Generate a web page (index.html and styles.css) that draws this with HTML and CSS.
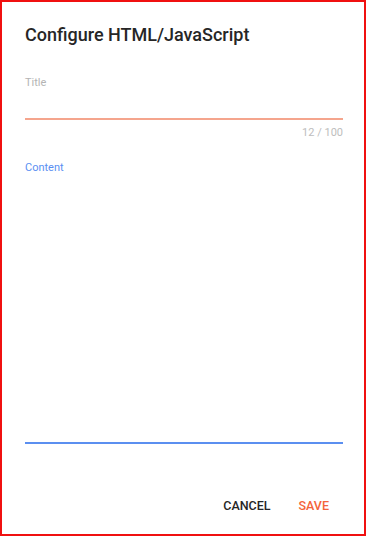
FILE: index.html
```html
<!DOCTYPE html>
<html lang="en">
<head>
<meta charset="utf-8">
<title>Configure HTML/JavaScript</title>
<link rel="stylesheet" href="styles.css">
</head>
<body>
<div class="frame">
  <div class="dialog">
    <h1 class="dialog-title">Configure HTML/JavaScript</h1>
    <div class="field field-title">
      <label class="field-label">Title</label>
      <div class="field-input"></div>
      <div class="field-counter">12 / 100</div>
    </div>
    <div class="field field-content">
      <label class="field-label label-active">Content</label>
      <div class="field-textarea"></div>
    </div>
    <div class="dialog-actions">
      <span class="btn btn-cancel">CANCEL</span>
      <span class="btn btn-save">SAVE</span>
    </div>
  </div>
</div>
</body>
</html>
```
FILE: styles.css
```css
html, body {
  margin: 0;
  padding: 0;
  background: #ffffff;
}
body {
  font-family: Roboto, "Liberation Sans", Arial, sans-serif;
}
.frame {
  box-sizing: border-box;
  width: 366px;
  height: 536px;
  border: 2px solid #f01010;
  background: #ffffff;
}
.dialog {
  display: flex;
  flex-direction: column;
  padding: 21px 21px 0 23px;
}
.dialog-title {
  margin: 0;
  font-size: 18px;
  line-height: 24px;
  font-weight: 500;
  color: #262626;
}
.field {
  display: flex;
  flex-direction: column;
}
.field-title {
  margin-top: 28px;
}
.field-label {
  font-size: 11px;
  line-height: 16px;
  color: #b4b4b4;
}
.label-active {
  color: #5b8ff2;
}
.field-input {
  height: 27px;
  border-bottom: 2px solid #f5a58d;
}
.field-counter {
  margin-top: 5px;
  font-size: 11px;
  line-height: 16px;
  color: #bdbdbd;
  text-align: right;
}
.field-content {
  margin-top: 19px;
}
.field-textarea {
  height: 266px;
  border-bottom: 2px solid #5b8ff0;
}
.dialog-actions {
  display: flex;
  justify-content: flex-end;
  gap: 28px;
  margin-top: 54px;
  padding-right: 14px;
}
.btn {
  font-size: 12.5px;
  line-height: 16px;
  font-weight: 500;
}
.btn-cancel {
  color: #262626;
}
.btn-save {
  color: #f4643a;
}
```
